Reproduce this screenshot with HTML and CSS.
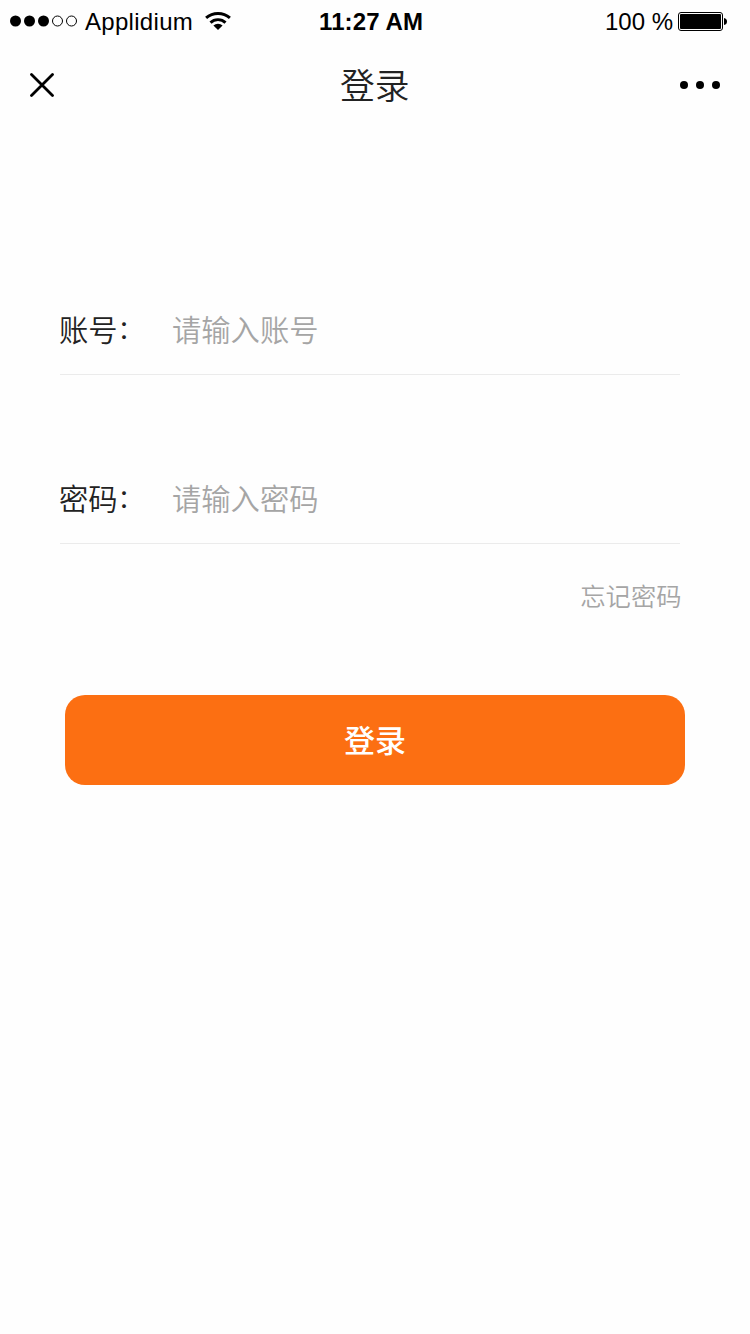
FILE: index.html
```html
<!DOCTYPE html>
<html lang="zh-CN">
<head>
<meta charset="utf-8">
<title>登录</title>
<link rel="stylesheet" href="styles.css">
</head>
<body>
<div class="status">
  <div class="carrier">
    <svg class="signal" width="68" height="12" viewBox="0 0 68 12">
      <circle cx="5.5" cy="6" r="5.5"/><circle cx="19.5" cy="6" r="5.5"/><circle cx="33.5" cy="6" r="5.5"/>
      <g fill="none" stroke="#000"><circle cx="47.5" cy="6" r="5"/><circle cx="61.5" cy="6" r="5"/></g>
    </svg>
    <span class="carrier-name">Applidium</span>
    <svg class="wifi" width="26" height="18" viewBox="0 0 26 18">
      <path d="M1.1 5.9Q6.2 1.5 13 1.5T24.9 5.9" fill="none" stroke="#000" stroke-width="3"/>
      <path d="M5.5 10.6Q8.5 7.6 13 7.6T20.5 10.6" fill="none" stroke="#000" stroke-width="2.9"/>
      <path d="M8.4 13.6Q10.3 11.8 13 11.8T17.6 13.6L13 18Z"/>
    </svg>
  </div>
  <div class="time">11:27 AM</div>
  <div class="power">
    <span class="percent">100 %</span>
    <svg class="battery" width="49" height="19" viewBox="0 0 49 19">
      <rect x=".5" y=".5" width="44" height="18" rx="2.5" fill="none" stroke="#000"/>
      <rect x="2" y="2" width="41" height="15" rx="1"/>
      <path d="M46 6Q49 6.5 49 9.5T46 13Z"/>
    </svg>
  </div>
</div>
<header class="nav">
  <svg class="close" width="24" height="24" viewBox="0 0 24 24"><path d="M1.5 1.5L22.5 22.5M22.5 1.5L1.5 22.5" stroke="#000" stroke-width="2.8" stroke-linecap="round"/></svg>
  <h1 class="title">登录</h1>
  <svg class="more" width="40" height="8" viewBox="0 0 40 8"><circle cx="4" cy="4" r="4"/><circle cx="20" cy="4" r="4"/><circle cx="36" cy="4" r="4"/></svg>
</header>
<main class="form">
  <label class="field"><span class="label">账号<span class="colon">：</span></span><input class="input" type="text" placeholder="请输入账号"></label>
  <label class="field"><span class="label">密码<span class="colon">：</span></span><input class="input" type="password" placeholder="请输入密码"></label>
  <a class="forgot">忘记密码</a>
  <button class="submit" type="button">登录</button>
</main>
</body>
</html>
```
FILE: styles.css
```css
* { box-sizing: border-box; }
body {
  margin: 0;
  height: 1334px;
  overflow: hidden;
  background: #fefefe;
  color: #222;
  font-family: "Noto Sans CJK SC", sans-serif;
}
svg { display: block; flex: none; }
.status {
  height: 40px;
  padding: 0 23px 0 10px;
  display: grid;
  grid-template-columns: 1fr auto 1fr;
  color: #000;
  font: 24px/43px "Liberation Sans", sans-serif;
  white-space: nowrap;
}
.carrier, .power { display: flex; align-items: flex-start; }
.signal { margin: 15px 7px 0 0; }
.carrier-name { letter-spacing: .3px; }
.wifi { margin: 12px 0 0 11.5px; }
.time { padding-left: 5px; font-weight: bold; letter-spacing: .1px; }
.power { justify-content: flex-end; }
.battery { margin: 12px 0 0 5px; }
.nav {
  height: 88px;
  padding: 0 30px 0 29.5px;
  display: flex;
  justify-content: space-between;
}
.close { margin-top: 32.5px; }
.title {
  margin: 18px 0 0 16px;
  font-size: 34.8px;
  line-height: 52px;
  font-weight: 350;
}
.more { margin-top: 41px; }
.form {
  padding: 160px 65px 0 60px;
  display: flex;
  flex-direction: column;
}
.field {
  width: 620px;
  height: 87px;
  display: flex;
  border-bottom: 1px solid #ebebeb;
  font-size: 29.3px;
  font-weight: 350;
  line-height: 80px;
}
.field + .field { margin-top: 82px; }
.label { width: 112px; margin-left: -1px; white-space: nowrap; }
.colon { font-size: 26px; line-height: 1; vertical-align: 2px; }
.input {
  width: 400px;
  height: 80px;
  margin-left: 1px;
  padding: 0;
  border: 0;
  outline: 0;
  background: transparent;
  font: inherit;
}
.input::placeholder { color: #a5a5a5; opacity: 1; }
.forgot {
  align-self: flex-end;
  margin: 31px 3.5px 0 0;
  color: #a5a5a5;
  font-size: 25.3px;
  font-weight: 350;
  line-height: 40px;
}
.submit {
  align-self: flex-end;
  width: 620px;
  height: 90px;
  margin-top: 80px;
  padding: 0 0 2px;
  border: 0;
  border-radius: 20px;
  background: #fc6f12;
  color: #fff;
  font: 500 31px/88px "Noto Sans CJK SC", sans-serif;
}
```
